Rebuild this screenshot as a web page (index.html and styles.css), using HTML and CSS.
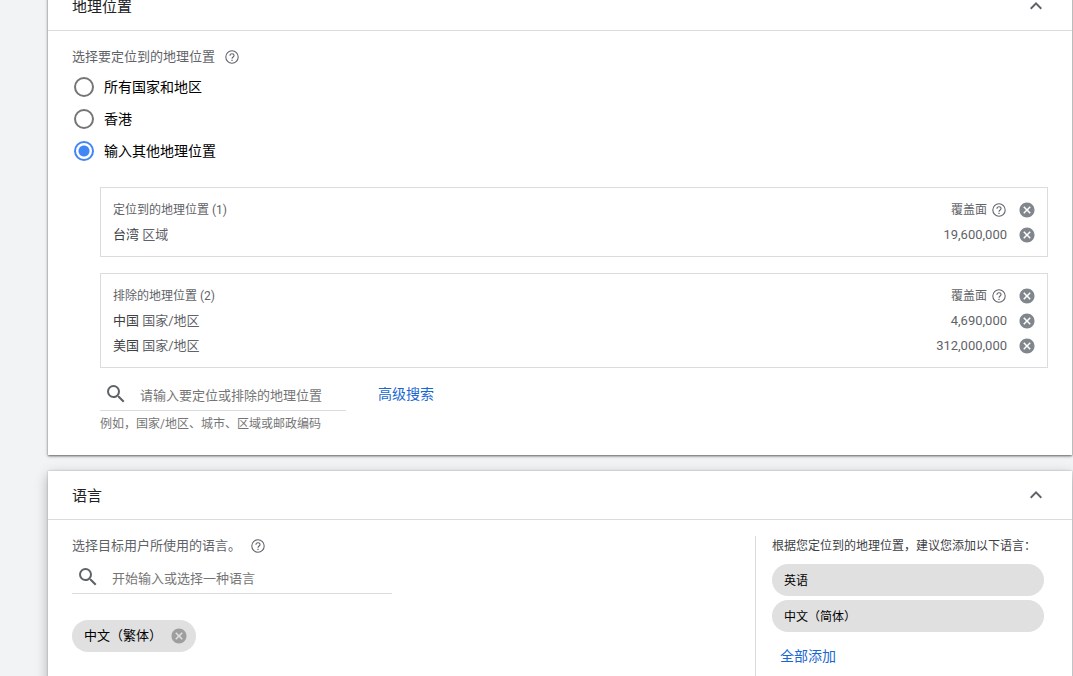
FILE: index.html
```html
<!DOCTYPE html>
<html lang="zh-CN">
<head>
<meta charset="utf-8">
<meta name="viewport" content="width=device-width, initial-scale=1">
<title>地理位置和语言</title>
<link rel="stylesheet" href="styles.css">
</head>
<body>
<svg class="sprite" aria-hidden="true">
  <symbol id="chevron" viewBox="0 0 24 24"><path d="M12 8l-6 6 1.41 1.41L12 10.83l4.59 4.58L18 14z"/></symbol>
  <symbol id="help" viewBox="0 0 24 24"><circle cx="12" cy="12" r="9.3" fill="none" stroke="currentColor" stroke-width="1.6"/><path d="M8.9 10c0-1.8 1.4-3 3.1-3s3.1 1.2 3.1 2.9c0 2-3.1 2.3-3.1 4.8" fill="none" stroke="currentColor" stroke-width="1.6"/><path d="M11.1 16.2h1.8V18h-1.8z"/></symbol>
  <symbol id="cancel" viewBox="0 0 24 24"><path d="M12 2C6.47 2 2 6.47 2 12s4.47 10 10 10 10-4.47 10-10S17.53 2 12 2zm5 13.59L15.59 17 12 13.41 8.41 17 7 15.59 10.59 12 7 8.41 8.41 7 12 10.59 15.59 7 17 8.41 13.41 12 17 15.59z"/></symbol>
  <symbol id="search" viewBox="0 0 24 24"><path d="M15.5 14h-.79l-.28-.27A6.47 6.47 0 0 0 16 9.5 6.5 6.5 0 1 0 9.5 16c1.61 0 3.09-.59 4.23-1.57l.27.28v.79l5 4.99L20.49 19l-4.99-5zm-6 0C7.01 14 5 11.99 5 9.5S7.01 5 9.5 5 14 7.01 14 9.5 11.99 14 9.5 14z"/></symbol>
</svg>
<main class="page">
  <section class="panel panel-locations">
    <header class="panel-header">
      <h2 class="panel-title">地理位置</h2>
      <button class="icon-button" type="button" aria-label="收起地理位置"><svg class="icon-large"><use href="#chevron"/></svg></button>
    </header>
    <div class="locations-body">
      <fieldset class="options">
        <legend class="field-label">选择要定位到的地理位置<button class="icon-button" type="button" aria-label="帮助"><svg class="icon-small"><use href="#help"/></svg></button></legend>
        <label class="option"><input class="radio" type="radio" name="location">所有国家和地区</label>
        <label class="option"><input class="radio" type="radio" name="location">香港</label>
        <label class="option"><input class="radio" type="radio" name="location" checked>输入其他地理位置</label>
      </fieldset>
      <div class="targets">
        <table class="target-box">
          <thead>
            <tr><th class="name">定位到的地理位置 (1)</th><th class="reach"><span class="reach-label">覆盖面<button class="icon-button" type="button" aria-label="覆盖面帮助"><svg class="icon-small"><use href="#help"/></svg></button></span></th><th class="remove"><button class="icon-button" type="button" aria-label="全部移除"><svg class="icon-cancel"><use href="#cancel"/></svg></button></th></tr>
          </thead>
          <tbody>
            <tr><td class="name"><span class="place">台湾</span> 区域</td><td class="reach">19,600,000</td><td class="remove"><button class="icon-button" type="button" aria-label="移除台湾"><svg class="icon-cancel"><use href="#cancel"/></svg></button></td></tr>
          </tbody>
        </table>
        <table class="target-box">
          <thead>
            <tr><th class="name">排除的地理位置 (2)</th><th class="reach"><span class="reach-label">覆盖面<button class="icon-button" type="button" aria-label="覆盖面帮助"><svg class="icon-small"><use href="#help"/></svg></button></span></th><th class="remove"><button class="icon-button" type="button" aria-label="全部移除"><svg class="icon-cancel"><use href="#cancel"/></svg></button></th></tr>
          </thead>
          <tbody>
            <tr><td class="name"><span class="place">中国</span> 国家/地区</td><td class="reach">4,690,000</td><td class="remove"><button class="icon-button" type="button" aria-label="移除中国"><svg class="icon-cancel"><use href="#cancel"/></svg></button></td></tr>
            <tr><td class="name"><span class="place">美国</span> 国家/地区</td><td class="reach">312,000,000</td><td class="remove"><button class="icon-button" type="button" aria-label="移除美国"><svg class="icon-cancel"><use href="#cancel"/></svg></button></td></tr>
          </tbody>
        </table>
        <div class="search-row">
          <div class="search-group">
            <label class="search-field"><svg class="icon-large"><use href="#search"/></svg><input class="search-input" type="text" aria-label="地理位置" placeholder="请输入要定位或排除的地理位置"></label>
            <p class="hint">例如，国家/地区、城市、区域或邮政编码</p>
          </div>
          <a class="link" href="#">高级搜索</a>
        </div>
      </div>
    </div>
  </section>

  <section class="panel panel-languages">
    <header class="panel-header">
      <h2 class="panel-title">语言</h2>
      <button class="icon-button" type="button" aria-label="收起语言"><svg class="icon-large"><use href="#chevron"/></svg></button>
    </header>
    <div class="languages-body">
      <div class="language-picker">
        <div class="field-label">选择目标用户所使用的语言。<button class="icon-button" type="button" aria-label="帮助"><svg class="icon-small"><use href="#help"/></svg></button></div>
        <label class="search-field search-language"><svg class="icon-large"><use href="#search"/></svg><input class="search-input" type="text" aria-label="语言" placeholder="开始输入或选择一种语言"></label>
        <div class="chip">中文（繁体）<button class="icon-button" type="button" aria-label="移除中文（繁体）"><svg class="icon-cancel"><use href="#cancel"/></svg></button></div>
      </div>
      <aside class="suggestions">
        <p class="suggestions-title">根据您定位到的地理位置，建议您添加以下语言：</p>
        <button class="suggestion" type="button">英语</button>
        <button class="suggestion" type="button">中文（简体）</button>
        <a class="link link-all" href="#">全部添加</a>
      </aside>
    </div>
  </section>
</main>
</body>
</html>
```

FILE: styles.css
```css
* {
  box-sizing: border-box;
}

body {
  margin: 0;
  height: 100vh;
  overflow: hidden;
  background: #f1f3f4;
  color: #5f6368;
  font-family: Roboto, "Noto Sans CJK SC", sans-serif;
  font-size: 13px;
  line-height: 20px;
}

h2,
p {
  margin: 0;
}

button,
input {
  font-family: inherit;
}

.sprite {
  display: none;
}

.page {
  display: flex;
  flex-direction: column;
  gap: 16px;
  padding: 0 1px 0 48px;
}

/* The first panel is scrolled partly out of view. */
.panel-locations {
  margin-top: -18px;
}

.panel {
  background: #fff;
  box-shadow: 0 1px 2px rgba(0, 0, 0, 0.5), 0 1px 4px rgba(0, 0, 0, 0.2);
}

.panel-languages {
  box-shadow: 0 0 2px rgba(0, 0, 0, 0.24), 0 4px 12px rgba(0, 0, 0, 0.28);
}

.panel-header {
  display: flex;
  align-items: center;
  justify-content: space-between;
  height: 49px;
  padding: 0 24px;
  border-bottom: 1px solid #dadce0;
}

.panel-title {
  padding-top: 1px;
  color: #202124;
  font-size: 15px;
  font-weight: 400;
}

.icon-button {
  display: flex;
  flex: none;
  padding: 0;
  border: 0;
  background: none;
  color: inherit;
}

svg {
  fill: currentColor;
}

.icon-large {
  width: 24px;
  height: 24px;
  flex: none;
}

.icon-small {
  width: 16px;
  height: 16px;
}

.icon-cancel {
  width: 18px;
  height: 18px;
}

.locations-body {
  padding: 16px 24px 24px;
}

.options {
  margin: 0;
  padding: 0;
  border: 0;
}

.field-label {
  display: flex;
  align-items: center;
  gap: 9px;
  padding: 0;
}

legend.field-label {
  margin-bottom: 4px;
}

.option {
  display: flex;
  align-items: center;
  gap: 10px;
  height: 32px;
  padding-left: 2px;
  color: #000;
  font-size: 14px;
}

.radio {
  appearance: none;
  width: 20px;
  height: 20px;
  margin: 0;
  border: 2px solid #757575;
  border-radius: 50%;
}

.radio:checked {
  border-color: #4285f4;
  background: radial-gradient(circle, #4285f4 5px, #fff 6px);
}

.targets {
  display: flex;
  flex-direction: column;
  gap: 16px;
  margin: 20px 0 0 28px;
}

.target-box {
  width: 100%;
  padding: 9px 11px 9px 12px;
  border: 1px solid #dadce0;
  border-spacing: 0;
}

.target-box th {
  height: 25px;
  padding: 0;
  font-size: 12px;
  font-weight: 400;
}

.target-box td {
  height: 25px;
  padding: 0;
}

.target-box .name {
  text-align: left;
}

.target-box .reach {
  width: 120px;
  text-align: right;
}

.target-box .remove {
  width: 29px;
  padding-left: 11px;
  color: #80868b;
}

.reach-label {
  display: flex;
  align-items: center;
  justify-content: flex-end;
  gap: 4px;
}

.place {
  color: #3c4043;
}

.search-row {
  display: flex;
  align-items: flex-start;
  gap: 32px;
  margin-top: -6px;
}

.search-row .link {
  padding-top: 6px;
}

.search-group {
  width: 246px;
}

.search-field {
  display: flex;
  align-items: center;
  gap: 12px;
  height: 33px;
  padding-left: 4px;
  border-bottom: 1px solid #dadce0;
}

.search-input {
  flex: 1;
  min-width: 0;
  padding: 3px 0 0;
  border: 0;
  outline: 0;
  background: none;
  color: #202124;
  font-size: 13px;
}

.search-input::placeholder {
  color: #757575;
}

.hint {
  margin-top: 5px;
  color: #757575;
  font-size: 12px;
  line-height: 16px;
  white-space: nowrap;
}

.locations-body {
  padding-bottom: 23px;
}

.link {
  color: #1967d2;
  font-size: 14px;
  text-decoration: none;
}

.languages-body {
  display: grid;
  grid-template-columns: 1fr 289px;
  padding: 16px 28px 16px 24px;
}

.search-language {
  width: 320px;
  margin: 5px 0 26px;
}

.chip {
  display: inline-flex;
  align-items: center;
  gap: 8px;
  height: 32px;
  padding: 0 8px 0 12px;
  border-radius: 16px;
  background: #e0e0e0;
  color: #000;
}

.chip .icon-button {
  color: #9e9e9e;
}

.suggestions {
  display: flex;
  flex-direction: column;
  gap: 4px;
  padding-left: 16px;
  border-left: 1px solid #dadce0;
}

.suggestions-title {
  margin-bottom: 4px;
  color: #3c4043;
  font-size: 12px;
  white-space: nowrap;
}

.suggestion {
  height: 32px;
  padding: 0 12px 1px;
  border: 0;
  border-radius: 16px;
  background: #e0e0e0;
  color: #000;
  font-size: 12px;
  text-align: left;
}

.link-all {
  padding: 10px 8px;
}
```
